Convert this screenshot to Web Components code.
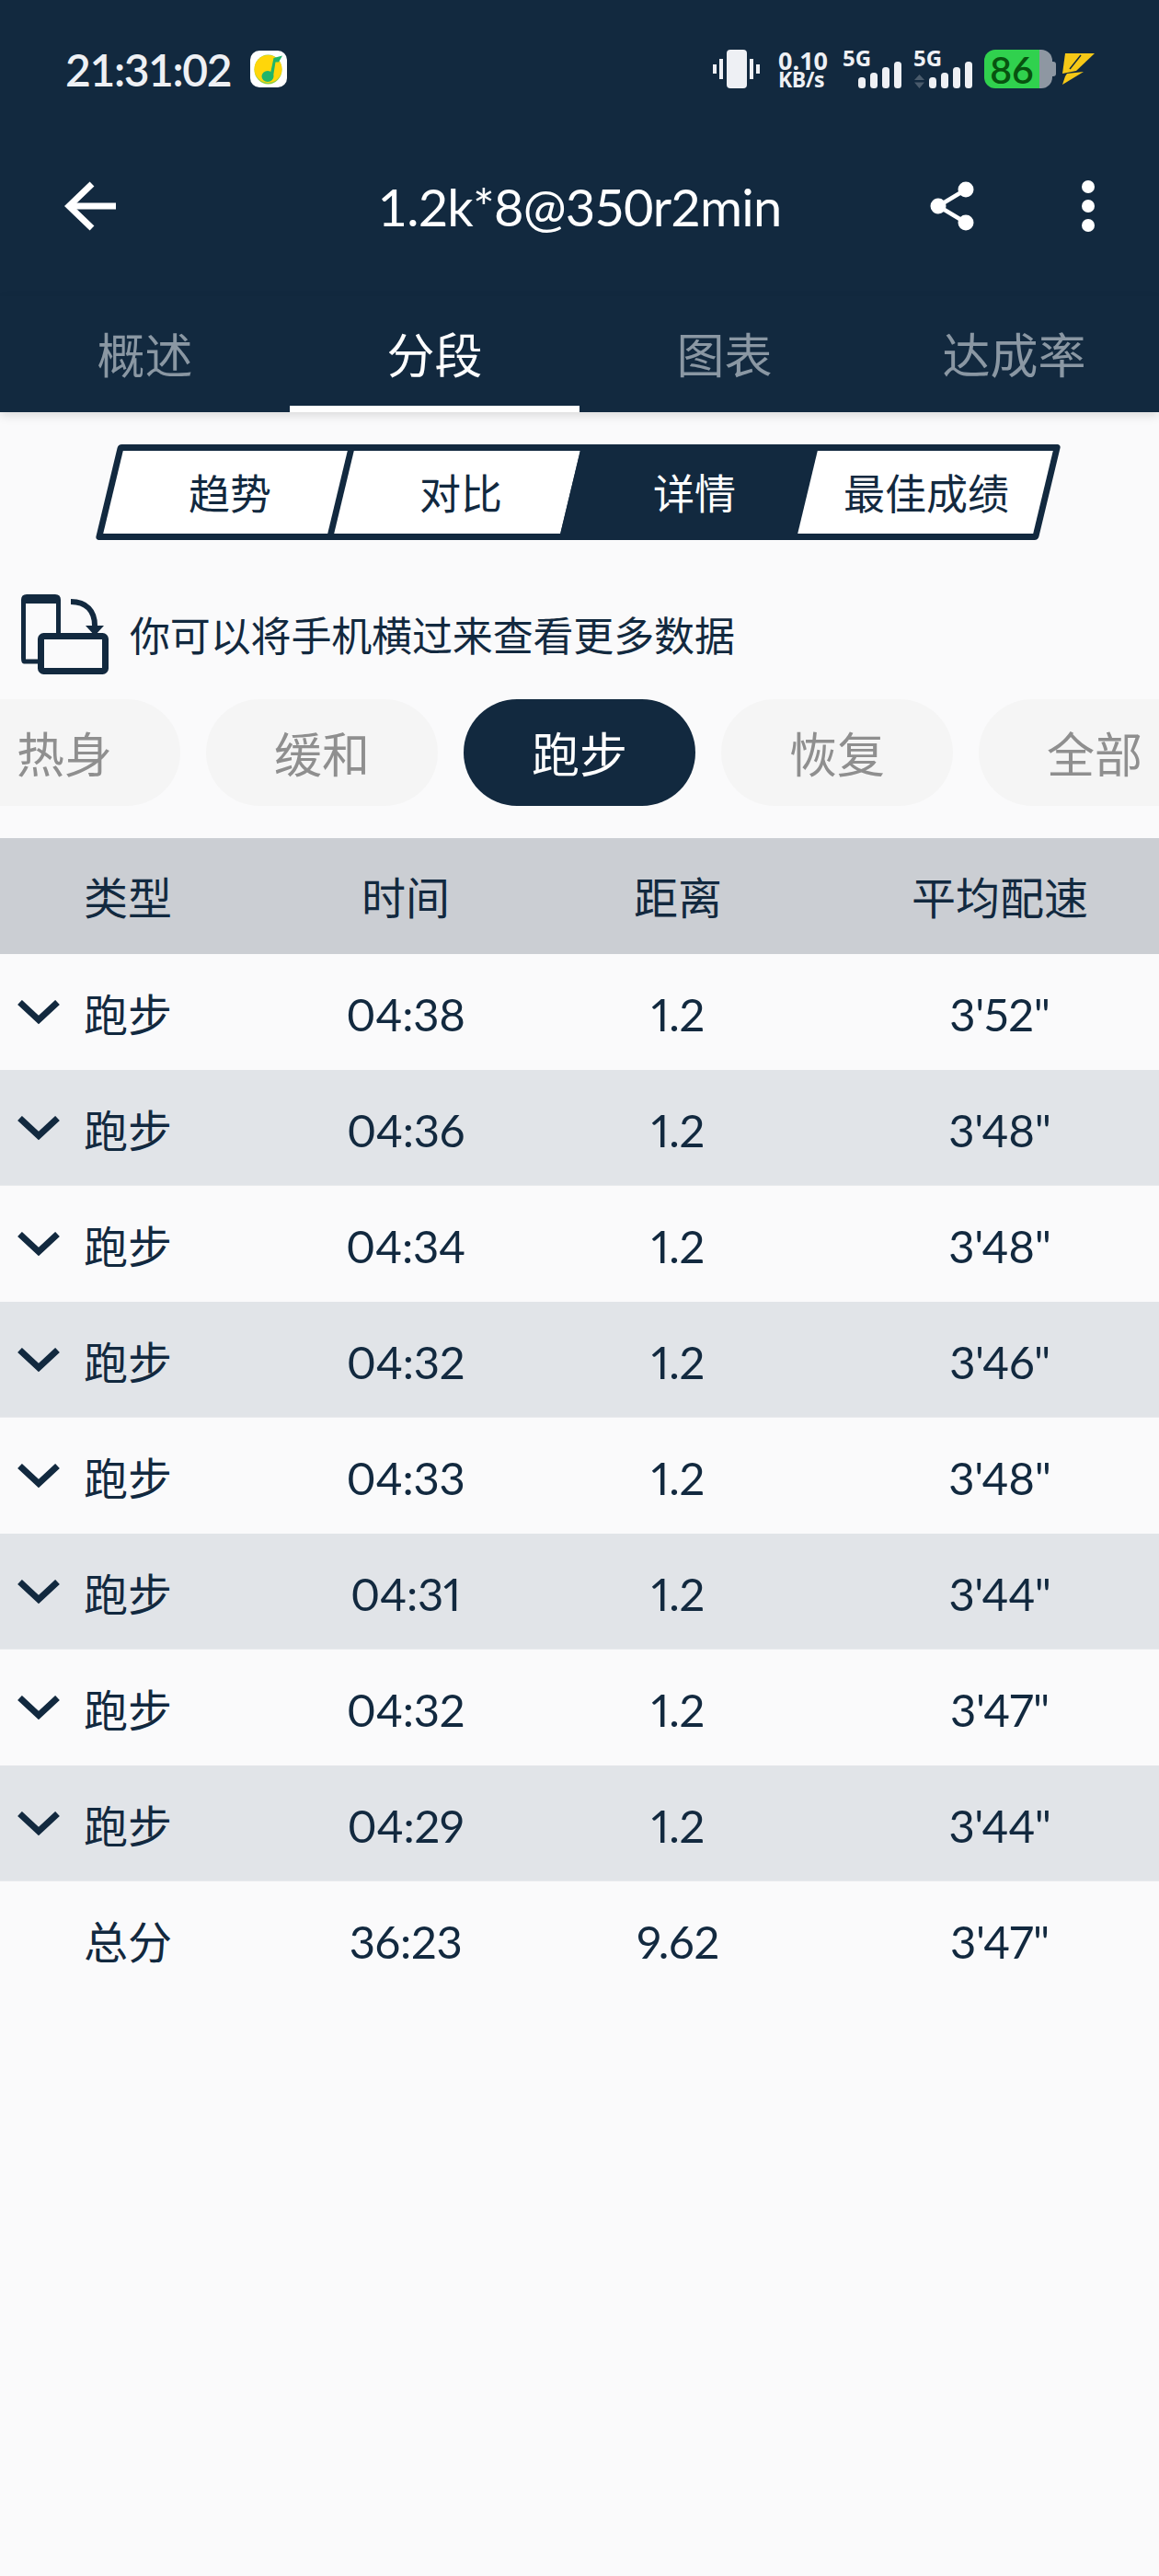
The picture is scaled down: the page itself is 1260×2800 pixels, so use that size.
<!DOCTYPE html>
<html lang="zh">
<head>
<meta charset="utf-8">
<title>1.2k*8@350r2min</title>
<style>
  html, body {
    background: #fafafb;
    color: #12293f;
    font-family: Lato, 'Noto Sans CJK SC', sans-serif;
    margin: 0;
    padding: 0;
  }
</style>
</head>
<body>
  <status-bar></status-bar>
  <app-bar>1.2k*8@350r2min</app-bar>
  <tab-bar>
    <tab-item>概述</tab-item>
    <tab-item active>分段</tab-item>
    <tab-item>图表</tab-item>
    <tab-item>达成率</tab-item>
  </tab-bar>
  <segment-control>
    <segment-item style="flex-basis: 244px; padding-left: 10px">趋势</segment-item>
    <segment-item style="flex-basis: 246px; margin-left: 7px; padding-left: 8px">对比</segment-item>
    <segment-item active style="flex-basis: 258px; padding-left: 12px">详情</segment-item>
    <segment-item style="flex-basis: 256px; padding-left: 2px">最佳成绩</segment-item>
  </segment-control>
  <hint-row>你可以将手机横过来查看更多数据</hint-row>
  <filter-pills>
    <filter-pill>热身</filter-pill>
    <filter-pill>缓和</filter-pill>
    <filter-pill active>跑步</filter-pill>
    <filter-pill>恢复</filter-pill>
    <filter-pill>全部</filter-pill>
  </filter-pills>
  <lap-row header><span>类型</span><span>时间</span><span>距离</span><span>平均配速</span></lap-row>
  <lap-row chevron><span>跑步</span><span>04:38</span><span>1.2</span><span>3'52"</span></lap-row>
  <lap-row chevron alt><span>跑步</span><span>04:36</span><span>1.2</span><span>3'48"</span></lap-row>
  <lap-row chevron><span>跑步</span><span>04:34</span><span>1.2</span><span>3'48"</span></lap-row>
  <lap-row chevron alt><span>跑步</span><span>04:32</span><span>1.2</span><span>3'46"</span></lap-row>
  <lap-row chevron><span>跑步</span><span>04:33</span><span>1.2</span><span>3'48"</span></lap-row>
  <lap-row chevron alt><span>跑步</span><span>04:31</span><span>1.2</span><span>3'44"</span></lap-row>
  <lap-row chevron><span>跑步</span><span>04:32</span><span>1.2</span><span>3'47"</span></lap-row>
  <lap-row chevron alt><span>跑步</span><span>04:29</span><span>1.2</span><span>3'44"</span></lap-row>
  <lap-row><span>总分</span><span>36:23</span><span>9.62</span><span>3'47"</span></lap-row>

<script>
class Shadowed extends HTMLElement {
  constructor( html ) {
    super();

    const template = document.createElement( 'template' );
    template.innerHTML = html;

    const shadowRoot = this.attachShadow( {mode: 'open'} );
    shadowRoot.appendChild( template.content.cloneNode( true ) );
  }
}

class SignalIcon extends Shadowed {
  constructor() {
    super( `
      <style>
        :host { display: block; height: 42px; width: 64px; }
        svg { display: block; overflow: visible; }
        text { fill: #eef0f4; font-family: 'Open Sans', sans-serif; font-size: 24px; font-weight: 700; }
        rect { fill: #eef0f4; }
        path { fill: #4a5b6c; display: none; }
        :host( [arrows] ) path { display: block; }
      </style>
      <svg width="64" height="42" viewBox="0 0 64 42">
        <text x="0" y="18">5G</text>
        <path d="M6.5 27 L12 33 H1 Z M6.5 42 L1 35.5 H12 Z"/>
        <rect x="17" y="30" width="8" height="12" rx="3.5"/>
        <rect x="30" y="25" width="8" height="17" rx="3.5"/>
        <rect x="43" y="19" width="8" height="23" rx="3.5"/>
        <rect x="56" y="13" width="8" height="29" rx="3.5"/>
      </svg>
    ` );
  }
}

class StatusBar extends Shadowed {
  constructor() {
    super( `
      <style>
        :host {
          align-items: center;
          background: #12293f;
          box-sizing: border-box;
          color: #eef0f4;
          display: flex;
          height: 150px;
          padding: 0 70px 0 71px;
        }
        .time {
          font-family: Lato, sans-serif;
          font-size: 48px;
          font-weight: 600;
          letter-spacing: -1.4px;
          margin-right: 20px;
          width: 181px;
        }
        .fill { flex-grow: 1; }
        svg { display: block; flex-shrink: 0; }
        .speed {
          font-family: 'Open Sans', sans-serif;
          font-weight: 700;
          margin: 0 22px 0 20px;
          text-align: center;
          width: 48px;
        }
        .speed div:first-child { font-size: 27px; height: 23px; line-height: 23px; }
        .speed div:last-child { font-size: 23px; height: 19px; letter-spacing: -.4px; line-height: 19px; }
        signal-icon { margin-right: 13px; }
        .battery {
          align-items: center;
          background: linear-gradient( 90deg, #30d14e 0, #30d14e 60px, #8e97a2 60px );
          border-radius: 12px;
          box-sizing: border-box;
          color: #07530f;
          display: flex;
          font-family: Lato, sans-serif;
          font-size: 41px;
          font-weight: 600;
          height: 42px;
          justify-content: center;
          padding-right: 14px;
          width: 74px;
        }
        .nub { background: #8e97a2; border-radius: 0 3px 3px 0; height: 16px; margin-right: 7px; width: 4px; }
      </style>
      <span class="time">21:31:02</span>
      <svg width="40" height="40" viewBox="0 0 40 40">
        <rect width="40" height="40" rx="10" fill="#fff"/>
        <ellipse cx="19.5" cy="20.5" rx="15" ry="16" fill="#8fce3e"/>
        <ellipse cx="19.5" cy="20" rx="15" ry="15" fill="#ffd60a"/>
        <ellipse cx="19" cy="28" rx="6.5" ry="6" fill="#1fb56a"/>
        <path d="M21.5 27 L25.5 8 L35 5.5 L31 12.5 L27.5 12.5 L25 28 Z" fill="#1fb56a"/>
      </svg>
      <span class="fill"></span>
      <svg width="51" height="42" viewBox="0 0 51 42" fill="#eef0f4">
        <rect x="15" y="0" width="22" height="42" rx="4"/>
        <rect x="7" y="10" width="4" height="22"/>
        <rect x="0" y="16" width="4" height="10"/>
        <rect x="40" y="10" width="4" height="22"/>
        <rect x="47" y="16" width="4" height="10"/>
      </svg>
      <div class="speed"><div>0.10</div><div>KB/s</div></div>
      <signal-icon></signal-icon>
      <signal-icon arrows></signal-icon>
      <div class="battery">86</div>
      <div class="nub"></div>
      <svg width="35" height="34" viewBox="0 0 35 34" fill="#f6c817">
        <path d="M3 0 H35 L15 19 L0 22 Z"/>
        <path d="M5 22 L23 20 L0 34 L3 25 Z"/>
        <path d="M20 2 L8 17" fill="none" stroke="#12293f" stroke-width="1.5"/>
      </svg>
    ` );
  }
}

class AppBar extends Shadowed {
  constructor() {
    super( `
      <style>
        :host {
          align-items: center;
          background: #12293f;
          box-sizing: border-box;
          color: #fff;
          display: flex;
          height: 172px;
          padding: 0 70px 24px 70px;
        }
        svg { display: block; flex-shrink: 0; }
        .back { margin-right: 123px; }
        .title {
          flex-grow: 1;
          font-family: Lato, sans-serif;
          font-size: 56px;
          font-weight: 400;
          letter-spacing: -.8px;
          text-align: center;
        }
        .share { margin-right: 117px; }
      </style>
      <svg class="back" width="56" height="54" viewBox="0 0 56 54" fill="none" stroke="#fff" stroke-width="7">
        <path d="M56 27 H5"/>
        <path d="M30 3 L5 27 L30 51"/>
      </svg>
      <div class="title"><slot></slot></div>
      <svg class="share" width="48" height="54" viewBox="0 0 48 54" fill="#fff">
        <circle cx="39" cy="9" r="8.5"/>
        <circle cx="9" cy="27" r="8.5"/>
        <circle cx="39" cy="45" r="8.5"/>
        <path d="M39 9 L9 27 L39 45" fill="none" stroke="#fff" stroke-width="4.5"/>
      </svg>
      <svg width="14" height="56" viewBox="0 0 14 56" fill="#fff">
        <circle cx="7" cy="7" r="7"/>
        <circle cx="7" cy="28" r="7"/>
        <circle cx="7" cy="49" r="7"/>
      </svg>
    ` );
  }
}

class TabBar extends Shadowed {
  constructor() {
    super( `
      <style>
        :host {
          background: #12293f;
          box-shadow: 0 4px 10px rgba( 0, 0, 0, .12 );
          display: flex;
          height: 126px;
          position: relative;
        }
      </style>
      <slot></slot>
    ` );
  }
}

class TabItem extends Shadowed {
  constructor() {
    super( `
      <style>
        :host {
          align-items: center;
          box-sizing: border-box;
          color: #8a97a3;
          display: flex;
          flex: 1 1 0;
          font-size: 52px;
          justify-content: center;
          padding-bottom: 3px;
        }
        :host( [active] ) {
          border-bottom: solid 7px #fff;
          color: #fff;
          padding: 4px 0 0 0;
        }
      </style>
      <slot></slot>
    ` );
  }
}

class SegmentControl extends Shadowed {
  constructor() {
    super( `
      <style>
        :host { display: block; padding: 35px 0 0 116px; }
        .frame {
          background: #12293f;
          border: solid 7px #12293f;
          border-radius: 4px;
          box-sizing: border-box;
          display: flex;
          height: 104px;
          transform: skewX( -13.5deg );
          width: 1025px;
        }
      </style>
      <div class="frame"><slot></slot></div>
    ` );
  }
}

class SegmentItem extends Shadowed {
  constructor() {
    super( `
      <style>
        :host {
          align-items: center;
          background: #fff;
          box-sizing: border-box;
          color: #12293f;
          display: flex;
          flex: 0 0 auto;
          font-size: 45px;
          justify-content: center;
          padding-bottom: 2px;
        }
        :host( [active] ) { background: #12293f; color: #fff; }
        span { transform: skewX( 13.5deg ); }
      </style>
      <span><slot></slot></span>
    ` );
  }
}

class HintRow extends Shadowed {
  constructor() {
    super( `
      <style>
        :host {
          align-items: center;
          color: #12293f;
          display: flex;
          font-size: 44px;
          gap: 23px;
          height: 88px;
          letter-spacing: -.15px;
          padding: 58px 0 0 22px;
        }
        svg { display: block; flex-shrink: 0; }
      </style>
      <svg width="96" height="88" viewBox="0 0 96 88" fill="none" stroke="#12293f">
        <path d="M22 74 H4 Q3.5 74 3.5 70 V7 Q3.5 3.5 7 3.5 H38 Q41.5 3.5 41.5 7 V44" stroke-width="5"/>
        <path d="M3.5 7 H41.5" stroke-width="8"/>
        <rect x="22.5" y="46.5" width="70" height="38" rx="3" stroke-width="7"/>
        <path d="M55 9 C72 9 81 19 81 35" stroke-width="6"/>
        <path d="M71 35 H91 L81 46 Z" fill="#12293f" stroke="none"/>
      </svg>
      <span><slot></slot></span>
    ` );
  }
}

class FilterPills extends Shadowed {
  constructor() {
    super( `
      <style>
        :host {
          display: flex;
          gap: 28px;
          margin-top: 27px;
          overflow: hidden;
        }
        .shift { flex: 0 0 0; margin-right: -84px; }
      </style>
      <div class="shift"></div>
      <slot></slot>
    ` );
  }
}

class FilterPill extends Shadowed {
  constructor() {
    super( `
      <style>
        :host {
          align-items: center;
          background: #f5f5f5;
          border-radius: 58px;
          box-sizing: border-box;
          color: #8f8f8f;
          display: flex;
          flex: 0 0 252px;
          font-size: 52px;
          height: 116px;
          justify-content: center;
          padding-bottom: 2px;
        }
        :host( [active] ) { background: #12293f; color: #fff; }
      </style>
      <slot></slot>
    ` );
  }
}

class LapRow extends Shadowed {
  constructor() {
    super( `
      <style>
        :host {
          color: #12293f;
          display: block;
          font-size: 49px;
          font-variant-numeric: proportional-nums;
          height: 126px;
          letter-spacing: -.3px;
        }
        :host( [header] ) { background: #cbced3; font-size: 48px; letter-spacing: 0; margin-top: 35px; }
        :host( [alt] ) { background: #e1e4e8; box-shadow: inset 0 -1px 0 #e8eaed; }
        .chevron {
          display: none;
          left: 19px;
          position: absolute;
          top: 50px;
        }
        :host( [chevron] ) .chevron { display: block; }
        .wrap { height: 126px; position: relative; }
        ::slotted( span ) {
          align-items: center;
          display: flex;
          justify-content: center;
        }
        ::slotted( span:first-child ) { font-size: 48px; letter-spacing: 0; }
        :host( [header] ) ::slotted( span ) { padding-bottom: 2px; }
        :host( :not( [header] ) ) ::slotted( span:not( :first-child ) ) { padding-top: 3px; }
        .grid {
          display: grid;
          grid-template-columns: 278px 326px 266px 1fr;
          height: 100%;
        }
        .grid ::slotted( span:last-child ) { padding-left: 44px; }
      </style>
      <div class="wrap">
        <svg class="chevron" width="46" height="27" viewBox="0 0 46 27" fill="none" stroke="#12293f" stroke-width="7">
          <path d="M2.5 2.5 L23 21.5 L43.5 2.5"/>
        </svg>
        <div class="grid"><slot></slot></div>
      </div>
    ` );
  }
}

window.customElements.define( 'signal-icon', SignalIcon );
window.customElements.define( 'status-bar', StatusBar );
window.customElements.define( 'app-bar', AppBar );
window.customElements.define( 'tab-bar', TabBar );
window.customElements.define( 'tab-item', TabItem );
window.customElements.define( 'segment-control', SegmentControl );
window.customElements.define( 'segment-item', SegmentItem );
window.customElements.define( 'hint-row', HintRow );
window.customElements.define( 'filter-pills', FilterPills );
window.customElements.define( 'filter-pill', FilterPill );
window.customElements.define( 'lap-row', LapRow );
</script>
</body>
</html>
